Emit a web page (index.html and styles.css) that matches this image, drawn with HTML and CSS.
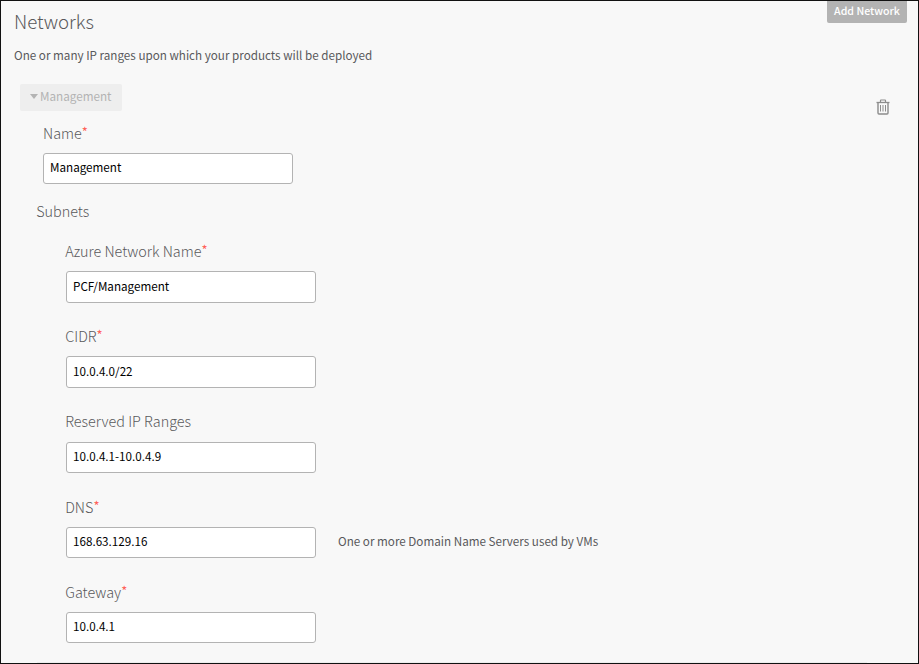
FILE: index.html
```html
<!DOCTYPE html>
<html lang="en">
<head>
<meta charset="utf-8">
<title>Networks</title>
<link rel="stylesheet" href="styles.css">
</head>
<body>
<main class="panel">
  <header class="header">
    <h1 class="title">Networks</h1>
    <button class="add" type="button">Add Network</button>
  </header>
  <p class="intro"><span>One or many IP ranges upon which your products will be deployed</span></p>
  <div class="bar">
    <button class="toggle" type="button"><span class="caret"></span><span>Management</span></button>
    <svg class="trash" width="14" height="16" viewBox="0 0 14 16" fill="none" stroke="#8c8c8c">
      <path d="M4.5 3V1.5Q4.5 1 5 1H9Q9.5 1 9.5 1.5V3" stroke-width="1.2"/>
      <path d="M.5 3.5H13.500" stroke-width="1.3"/>
      <path d="M2 4V14Q2 15 3 15H11Q12 15 12 14V4" stroke-width="1.4"/>
      <path d="M4.500 6V12.500M7 6V12.500M9.500 6V12.500" stroke-width="1"/>
    </svg>
  </div>
  <div class="field name">
    <label class="label" for="name">Name<sup>*</sup></label>
    <input class="input" id="name" value="Management">
  </div>
  <h2 class="section">Subnets</h2>
  <div class="subnets">
    <div class="field">
      <label class="label" for="azure">Azure Network Name<sup>*</sup></label>
      <input class="input" id="azure" value="PCF/Management">
    </div>
    <div class="field">
      <label class="label" for="cidr">CIDR<sup>*</sup></label>
      <input class="input" id="cidr" value="10.0.4.0/22">
    </div>
    <div class="field">
      <label class="label" for="reserved">Reserved IP Ranges</label>
      <input class="input" id="reserved" value="10.0.4.1-10.0.4.9">
    </div>
    <div class="field">
      <label class="label" for="dns">DNS<sup>*</sup></label>
      <div class="row">
        <input class="input" id="dns" value="168.63.129.16">
        <span class="hint">One or more Domain Name Servers used by VMs</span>
      </div>
    </div>
    <div class="field">
      <label class="label" for="gateway">Gateway<sup>*</sup></label>
      <input class="input" id="gateway" value="10.0.4.1">
    </div>
  </div>
</main>
</body>
</html>
```
FILE: styles.css
```css
* { box-sizing: border-box; }
body {
  margin: 0;
  font-family: "Noto Sans CJK SC", "Open Sans", sans-serif;
  font-size: 11.66px;
  color: #58595b;
}
.panel {
  height: 664px;
  overflow: hidden;
  border: 1px solid #111;
  background: #f8f8f8;
}
.header {
  display: flex;
  justify-content: space-between;
  align-items: flex-start;
  height: 42px;
  padding: 0 11px 0 13px;
}
.title {
  margin: 4px 0 0;
  font-size: 18.7px;
  line-height: 31px;
  font-weight: 300;
}
.add {
  width: 80px;
  height: 22px;
  padding: 0 0 3px;
  border: 0;
  border-radius: 0 0 2px 2px;
  background: #b3b3b3;
  color: #fff;
  font: 500 10.6px/19px "Noto Sans CJK SC", sans-serif;
  white-space: nowrap;
}
.intro {
  margin: 0 0 0 13px;
  height: 41px;
  line-height: 24px;
}
.bar {
  display: flex;
  justify-content: space-between;
  height: 39px;
  padding: 0 28px 0 19px;
}
.toggle {
  display: flex;
  align-items: center;
  gap: 2px;
  width: 102px;
  height: 27px;
  padding: 0 0 3px 10px;
  border: 0;
  border-radius: 2px;
  background: #eee;
  color: #b3b3b3;
  font: 400 11.7px/24px "Noto Sans CJK SC", sans-serif;
}
.caret {
  border: 4px solid transparent;
  border-top: 5px solid #b3b3b3;
  border-bottom: 0;
}
.trash { margin-top: 15px; }
.label {
  display: block;
  height: 29.6px;
  line-height: 20px;
  font-size: 14.4px;
  font-weight: 300;
}
.label sup {
  color: #ff6259;
  font-size: 13px;
  font-weight: 400;
  line-height: 0;
  vertical-align: 2px;
}
.input {
  display: block;
  width: 250px;
  height: 31.35px;
  padding: 0 6px 3px;
  border: 1px solid #b3b3b3;
  border-radius: 3px;
  background: #fff;
  color: #000;
  font: 400 11.66px/20px "Noto Sans CJK SC", sans-serif;
}
.name {
  height: 77px;
  margin-left: 42px;
}
.section {
  height: 41.6px;
  margin: 0 0 0 35.2px;
  font-size: 14.4px;
  line-height: 22px;
  font-weight: 300;
}
.subnets {
  height: 421.4px;
  margin: 0 51px 0 36px;
  padding-left: 29px;
  border-bottom: 1px solid #ececec;
}
.subnets .label {
  margin-left: -0.8px;
  line-height: 18px;
}
.subnets .field { height: 85.2px; }
.subnets .field:nth-child(n+4) .label { line-height: 19px; }
.subnets .field:last-child {
  height: 70px;
}
.subnets .field:last-child .input { padding-bottom: 4px; }
.row {
  display: flex;
  gap: 22px;
}
.hint { line-height: 28px; }
```
